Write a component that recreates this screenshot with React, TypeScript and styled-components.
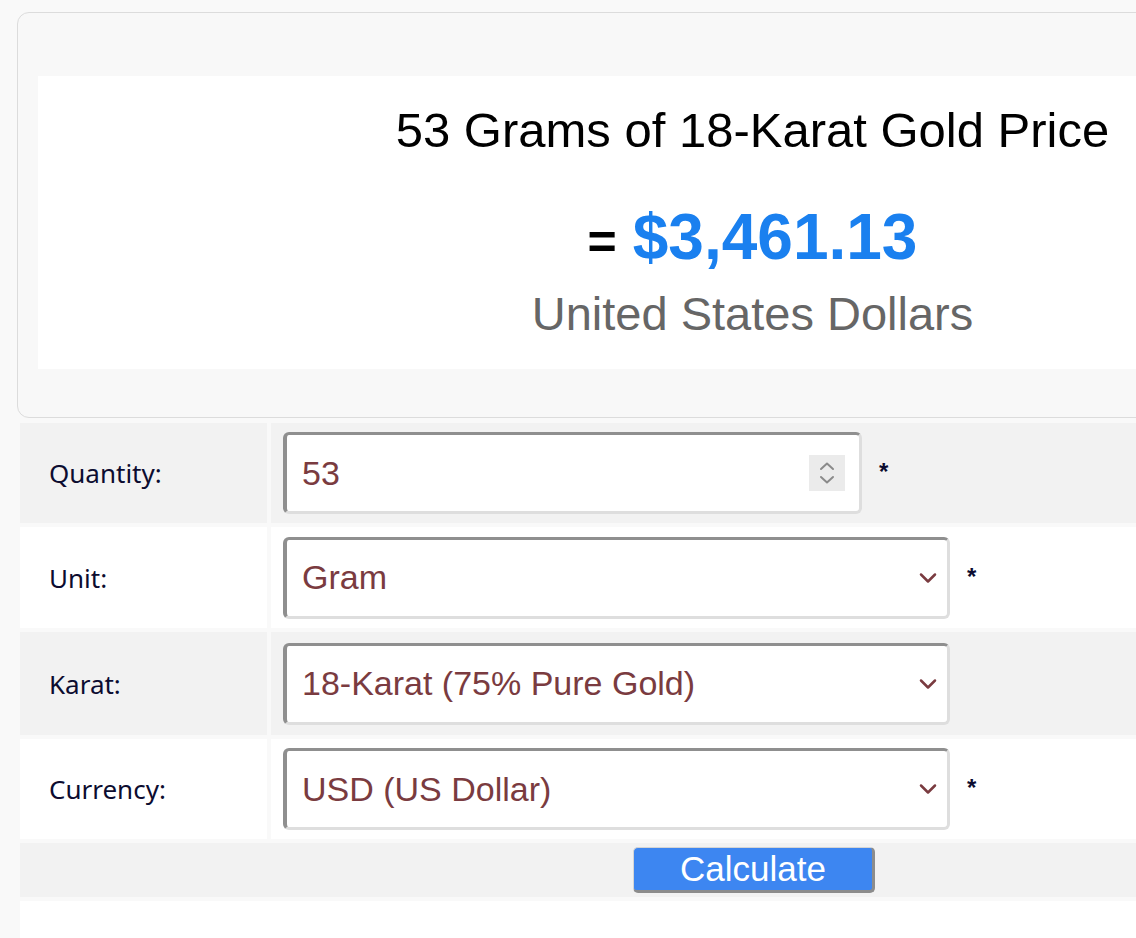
import React from "react";
import styled, { createGlobalStyle } from "styled-components";

const Global = createGlobalStyle`
  html, body {
    margin: 0;
    padding: 0;
    background: #f9f9f9;
    overflow: hidden;
  }
  body {
    font-family: "Liberation Sans", Arial, sans-serif;
  }
`;

const Page = styled.div`
  padding: 12px 0 0 17px;
  width: 1471px;
`;

const ResultBox = styled.section`
  box-sizing: border-box;
  width: 1471px;
  border: 1px solid #dcdcdc;
  border-radius: 12px;
  background: #f8f8f8;
  padding: 63px 20px 48px;
`;

const ResultInner = styled.div`
  background: #ffffff;
  padding: 26px 0 28px;
  text-align: center;
  font-family: "Liberation Sans", Arial, sans-serif;
`;

const Title = styled.h1`
  margin: 0;
  font-size: 49px;
  line-height: 56px;
  font-weight: 400;
  color: #000;
`;

const AmountLine = styled.div`
  margin-top: 42px;
  line-height: 74px;
  font-weight: 700;
  color: #000;
`;

const Equals = styled.span`
  font-size: 50px;
  margin-right: 16px;
`;

const Amount = styled.span`
  font-size: 64px;
  color: #1a80ef;
`;

const CurrencyName = styled.div`
  margin-top: -4px;
  font-size: 47px;
  line-height: 54px;
  color: #666;
`;

const Form = styled.div`
  margin: 5px 0 0 3px;
  width: 1468px;
  display: flex;
  flex-direction: column;
  gap: 4px;
`;

const Row = styled.div<{ $shade: boolean; $h: number }>`
  display: grid;
  grid-template-columns: 247px 1fr;
  column-gap: 4px;
  height: ${(p) => p.$h}px;
  & > * {
    background: ${(p) => (p.$shade ? "#f2f2f2" : "#ffffff")};
  }
`;

const Label = styled.div`
  display: flex;
  align-items: center;
  padding-left: 29px;
  font-family: "Noto Sans", "Lato", sans-serif;
  font-size: 26px;
  color: #0c0c30;
`;

const FieldCell = styled.div`
  display: flex;
  align-items: center;
  padding-left: 12px;
`;

const FieldBox = styled.div<{ $w: number }>`
  box-sizing: border-box;
  width: ${(p) => p.$w}px;
  height: 82px;
  display: flex;
  align-items: center;
  padding: 0 10px 0 15px;
  background: #fff;
  border-style: solid;
  border-width: 3px 3px 3px 4px;
  border-color: #8f8f8f #dedede #dedede #8f8f8f;
  border-radius: 6px;
  font-family: "Liberation Sans", Arial, sans-serif;
  font-size: 34px;
  color: #7a3b40;
`;

const FieldText = styled.span`
  flex: 1;
`;

const Spinner = styled.span`
  width: 36px;
  height: 36px;
  margin-right: 4px;
  background: #ebebeb;
  display: flex;
  align-items: center;
  justify-content: center;
`;

const Required = styled.span`
  margin-left: 17px;
  padding-bottom: 2px;
  font-family: "Liberation Sans", Arial, sans-serif;
  font-weight: 700;
  font-size: 24px;
  color: #0c0c30;
`;

const ButtonRow = styled.div`
  height: 54px;
  background: #f2f2f2;
  display: flex;
  align-items: center;
  justify-content: center;
`;

const CalcButton = styled.button`
  box-sizing: border-box;
  width: 242px;
  height: 46px;
  padding: 0 0 2px;
  background: #3d86f1;
  color: #fff;
  font-family: "Liberation Sans", Arial, sans-serif;
  font-size: 35px;
  line-height: 1;
  border-style: solid;
  border-width: 1px 3px 3px 1px;
  border-color: #d5d5d5 #8c8c8c #8c8c8c #d5d5d5;
  border-radius: 5px;
  cursor: pointer;
`;

const Filler = styled.div`
  height: 60px;
  background: #ffffff;
`;

const Chevron = () => (
  <svg width="18" height="12" viewBox="0 0 18 12" fill="none">
    <path d="M2 2.5 L9 9.5 L16 2.5" stroke="#7a3b40" strokeWidth="2.5" strokeLinecap="round" strokeLinejoin="round" />
  </svg>
);

const SpinIcon = () => (
  <svg width="20" height="28" viewBox="0 0 20 28" fill="none">
    <path d="M4 10 L10 4.5 L16 10" stroke="#8a8a8a" strokeWidth="2" strokeLinecap="round" strokeLinejoin="round" />
    <path d="M4 18 L10 23.5 L16 18" stroke="#8a8a8a" strokeWidth="2" strokeLinecap="round" strokeLinejoin="round" />
  </svg>
);

type SelectRow = { label: string; value: string; required: boolean; shade: boolean; h: number };

const selects: SelectRow[] = [
  { label: "Unit:", value: "Gram", required: true, shade: false, h: 101 },
  { label: "Karat:", value: "18-Karat (75% Pure Gold)", required: false, shade: true, h: 103 },
  { label: "Currency:", value: "USD (US Dollar)", required: true, shade: false, h: 100 },
];

export default function App() {
  return (
    <>
      <Global />
      <Page>
        <ResultBox>
          <ResultInner>
            <Title>53 Grams of 18-Karat Gold Price</Title>
            <AmountLine>
              <Equals>=</Equals>
              <Amount>$3,461.13</Amount>
            </AmountLine>
            <CurrencyName>United States Dollars</CurrencyName>
          </ResultInner>
        </ResultBox>
        <Form>
          <Row $shade $h={100}>
            <Label>Quantity:</Label>
            <FieldCell>
              <FieldBox $w={579}>
                <FieldText>53</FieldText>
                <Spinner>
                  <SpinIcon />
                </Spinner>
              </FieldBox>
              <Required>*</Required>
            </FieldCell>
          </Row>
          {selects.map((s) => (
            <Row key={s.label} $shade={s.shade} $h={s.h}>
              <Label>{s.label}</Label>
              <FieldCell>
                <FieldBox $w={667}>
                  <FieldText>{s.value}</FieldText>
                  <Chevron />
                </FieldBox>
                {s.required && <Required>*</Required>}
              </FieldCell>
            </Row>
          ))}
          <ButtonRow>
            <CalcButton>Calculate</CalcButton>
          </ButtonRow>
          <Filler />
        </Form>
      </Page>
    </>
  );
}
